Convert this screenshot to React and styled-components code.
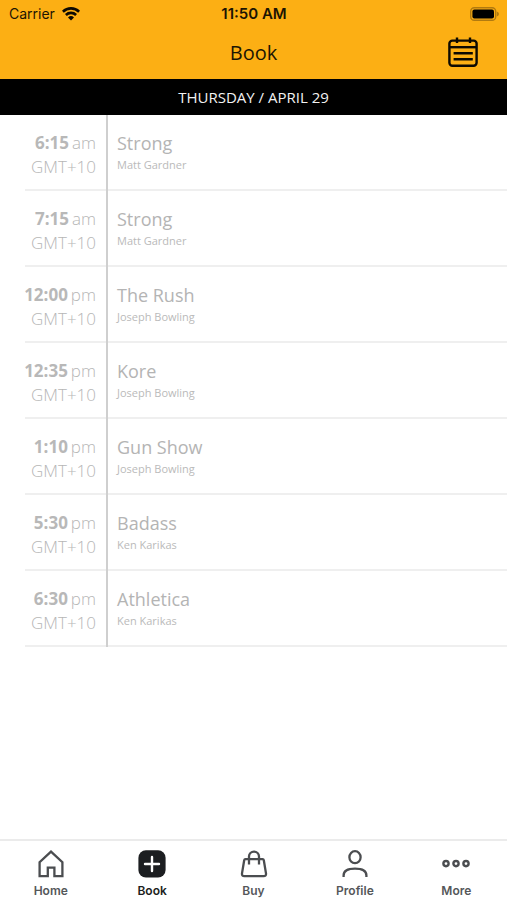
import React from "react";
import styled, { createGlobalStyle } from "styled-components";

const classes = [
  { time: "6:15", period: "am", name: "Strong", coach: "Matt Gardner" },
  { time: "7:15", period: "am", name: "Strong", coach: "Matt Gardner" },
  { time: "12:00", period: "pm", name: "The Rush", coach: "Joseph Bowling" },
  { time: "12:35", period: "pm", name: "Kore", coach: "Joseph Bowling" },
  { time: "1:10", period: "pm", name: "Gun Show", coach: "Joseph Bowling" },
  { time: "5:30", period: "pm", name: "Badass", coach: "Ken Karikas" },
  { time: "6:30", period: "pm", name: "Athletica", coach: "Ken Karikas" },
];

function WifiIcon() {
  return (
    <svg width="18" height="14" viewBox="0 0 18 14" fill="none" stroke="#0d0a02" strokeWidth="2.6">
      <path d="M0.9 4.7 A11.6 11.6 0 0 1 17.1 4.7" />
      <path d="M3.9 8 A7.3 7.3 0 0 1 14.1 8" />
      <path d="M9 13.6 L6 10.5 A4.3 4.3 0 0 1 12 10.5 Z" fill="#0d0a02" stroke="none" />
    </svg>
  );
}

function BatteryIcon() {
  return (
    <svg width="30" height="14" viewBox="0 0 30 14">
      <rect x="1.7" y="0.7" width="25" height="12.6" rx="3.6" fill="none" stroke="#b17a10" strokeWidth="1.4" />
      <rect x="3.4" y="2.4" width="21.6" height="9.2" rx="2" fill="#000" />
      <path d="M27.8 4.6 Q30 5.4 30 7 Q30 8.6 27.8 9.4 Z" fill="#b17a10" />
    </svg>
  );
}

function CalendarIcon() {
  return (
    <svg width="30" height="30" viewBox="0 0 30 30" fill="none" stroke="#0d0a02" strokeWidth="2.4">
      <rect x="1.4" y="3.6" width="27.2" height="25.2" rx="3" />
      <path d="M1.4 10.2 H28.6" />
      <path d="M9 0.4 V6 M22 0.4 V6" />
      <path d="M5.6 16.2 H24.8 M5.6 22.2 H24.8" />
    </svg>
  );
}

function HomeIcon() {
  return (
    <svg width="28" height="28" viewBox="0 0 28 28" fill="none" stroke="#4b4d50" strokeWidth="2.3">
      <path d="M2.6 26.2 V12.2 L14 1.6 L25.4 12.2 V26.2 H17.4 V17.6 H10.8 V26.2 Z" />
    </svg>
  );
}

function BookIcon() {
  return (
    <svg width="28" height="28" viewBox="0 0 28 28">
      <rect x="0.4" y="0.2" width="27.2" height="27.2" rx="7.5" fill="#1c1e21" />
      <path d="M14 7 V21 M7 14 H21" stroke="#fff" strokeWidth="2.4" strokeLinecap="round" />
    </svg>
  );
}

function BagIcon() {
  return (
    <svg width="28" height="28" viewBox="0 0 28 28" fill="none" stroke="#4b4d50" strokeWidth="2.3" strokeLinejoin="round">
      <path d="M5.4 9.2 H22.6 Q23.6 9.2 23.8 10.2 L26 23.4 Q26.3 26.2 23.6 26.2 H4.4 Q1.7 26.2 2 23.4 L4.2 10.2 Q4.4 9.2 5.4 9.2 Z" />
      <path d="M9 14.6 V6.6 A5 5 0 0 1 19 6.6 V14.6" />
    </svg>
  );
}

function ProfileIcon() {
  return (
    <svg width="28" height="28" viewBox="0 0 28 28" fill="none" stroke="#4b4d50" strokeWidth="2.3">
      <ellipse cx="14" cy="7.2" rx="5.6" ry="6" />
      <path d="M2.6 27 V25.4 Q2.6 18.6 14 18.6 Q25.4 18.6 25.4 25.4 V27" />
    </svg>
  );
}

function MoreIcon() {
  return (
    <svg width="28" height="28" viewBox="0 0 28 28" fill="none" stroke="#4b4d50" strokeWidth="2.4">
      <circle cx="4" cy="13.6" r="2.6" />
      <circle cx="14" cy="13.6" r="2.6" />
      <circle cx="24" cy="13.6" r="2.6" />
    </svg>
  );
}

const tabs = [
  { label: "Home", Icon: HomeIcon },
  { label: "Book", Icon: BookIcon, active: true },
  { label: "Buy", Icon: BagIcon },
  { label: "Profile", Icon: ProfileIcon },
  { label: "More", Icon: MoreIcon },
];

function App() {
  return (
    <>
      <GlobalStyle />
      <Screen>
        <Header>
          <StatusBar>
            <Carrier>
              Carrier
              <WifiIcon />
            </Carrier>
            <Clock>11:50 AM</Clock>
            <Battery>
              <BatteryIcon />
            </Battery>
          </StatusBar>
          <TitleBar>
            <Title>Book</Title>
            <CalendarButton type="button" aria-label="Calendar">
              <CalendarIcon />
            </CalendarButton>
          </TitleBar>
        </Header>
        <DateBar>THURSDAY / APRIL 29</DateBar>
        <ClassList>
          {classes.map((item) => (
            <ClassRow key={item.time}>
              <TimeColumn>
                <Time>
                  <strong>{item.time}</strong>
                  <span>{item.period}</span>
                </Time>
                <Zone>GMT+10</Zone>
              </TimeColumn>
              <Details>
                <ClassName>{item.name}</ClassName>
                <Coach>{item.coach}</Coach>
              </Details>
            </ClassRow>
          ))}
        </ClassList>
        <TabBar>
          {tabs.map(({ label, Icon, active }) => (
            <Tab key={label} href={`#${label}`} $active={active}>
              <Icon />
              {label}
            </Tab>
          ))}
        </TabBar>
      </Screen>
    </>
  );
}

export default App;

const GlobalStyle = createGlobalStyle`
  * {
    box-sizing: border-box;
  }

  body {
    margin: 0;
    background: #fff;
    font-family: "Open Sans", "Noto Sans", sans-serif;
  }

  svg {
    display: block;
  }
`;

const Screen = styled.div`
  min-height: 100vh;
  display: flex;
  flex-direction: column;
`;

const Header = styled.header`
  background: #fcaf14;
  color: #1c1503;
`;

const StatusBar = styled.div`
  display: grid;
  grid-template-columns: 1fr auto 1fr;
  align-items: center;
  height: 27px;
  padding: 0 8px 0 9px;
  font-family: Inter, sans-serif;
  font-size: 14px;
`;

const Carrier = styled.div`
  display: flex;
  align-items: center;
  gap: 7px;
`;

const Clock = styled.time`
  font-size: 15px;
  font-weight: 600;
`;

const Battery = styled.div`
  justify-self: end;
`;

const TitleBar = styled.div`
  display: grid;
  grid-template-columns: 1fr auto 1fr;
  align-items: center;
  height: 52px;
  padding: 0 29px 2px;
`;

const Title = styled.h1`
  grid-column: 2;
  margin: 0;
  font-size: 20px;
  font-weight: 400;
`;

const CalendarButton = styled.button`
  justify-self: end;
  padding: 0;
  border: 0;
  background: none;
  cursor: pointer;
`;

const DateBar = styled.h2`
  margin: 0;
  background: #000;
  color: #f2f2f2;
  font-size: 15px;
  font-weight: 400;
  line-height: 36px;
  text-align: center;
`;

const ClassList = styled.ul`
  flex: 1;
  margin: 0;
  padding: 0 0 0 25px;
  list-style: none;
`;

const ClassRow = styled.li`
  display: flex;
  height: 76px;
  border-bottom: 2px solid #efefef;
`;

const TimeColumn = styled.div`
  flex: none;
  width: 83px;
  margin-bottom: -2px;
  padding: 16px 10px 0 0;
  border-right: 2px solid #cfcfcf;
  color: #b6b6b6;
  font-size: 17px;
  font-weight: 300;
  line-height: 24px;
  text-align: right;
`;

const Time = styled.div`
  display: flex;
  justify-content: flex-end;
  gap: 3px;

  strong {
    color: #b8b8b8;
    font-weight: 700;
  }
`;

const Zone = styled.div`
  white-space: nowrap;
`;

const Details = styled.div`
  flex: 1;
  padding: 16px 10px 0 9px;
`;

const ClassName = styled.div`
  color: #b4b4b4;
  font-size: 18px;
  line-height: 24px;
`;

const Coach = styled.div`
  color: #bababa;
  font-size: 11px;
  line-height: 20px;
`;

const TabBar = styled.nav`
  display: flex;
  height: 61px;
  border-top: 2px solid #ebebeb;
`;

const Tab = styled.a`
  flex: 1;
  display: flex;
  flex-direction: column;
  align-items: center;
  gap: 5px;
  padding-top: 9px;
  color: ${(props) => (props.$active ? "#1c1e21" : "#55575a")};
  font-family: Inter, sans-serif;
  font-size: 12px;
  font-weight: 600;
  line-height: 16px;
  text-decoration: none;
`;
